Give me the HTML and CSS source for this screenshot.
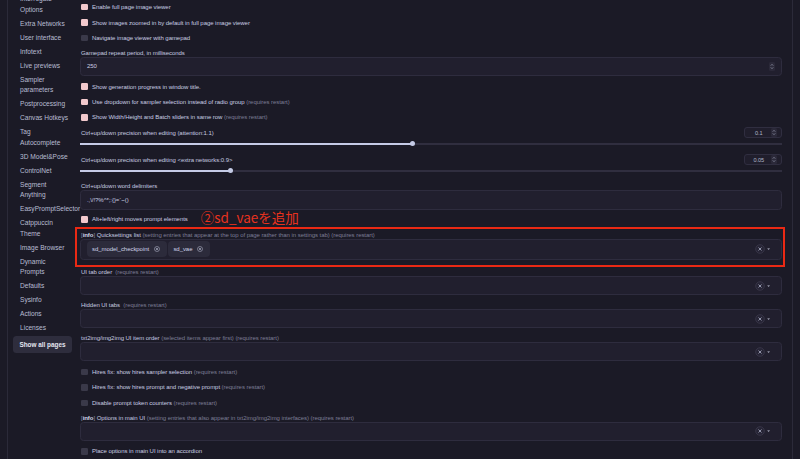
FILE: index.html
```html
<!DOCTYPE html>
<html lang="ja">
<head>
<meta charset="utf-8">
<title>Settings</title>
<link rel="stylesheet" href="styles.css">
</head>
<body>
<div class="page">
  <nav class="sidebar">
    <div class="nav-list">
      <div class="nav-item">Interrogate Options</div>
      <div class="nav-item">Extra Networks</div>
      <div class="nav-item">User interface</div>
      <div class="nav-item">Infotext</div>
      <div class="nav-item">Live previews</div>
      <div class="nav-item">Sampler parameters</div>
      <div class="nav-item">Postprocessing</div>
      <div class="nav-item">Canvas Hotkeys</div>
      <div class="nav-item">Tag Autocomplete</div>
      <div class="nav-item">3D Model&amp;Pose</div>
      <div class="nav-item">ControlNet</div>
      <div class="nav-item">Segment Anything</div>
      <div class="nav-item nowrap">EasyPromptSelector</div>
      <div class="nav-item">Catppuccin Theme</div>
      <div class="nav-item">Image Browser</div>
      <div class="nav-item">Dynamic Prompts</div>
      <div class="nav-item">Defaults</div>
      <div class="nav-item">Sysinfo</div>
      <div class="nav-item">Actions</div>
      <div class="nav-item">Licenses</div>
    </div>
    <button class="show-all">Show all pages</button>
  </nav>

  <main class="settings">
    <div class="check-row"><span class="box on"></span><span>Enable full page image viewer</span></div>
    <div class="check-row"><span class="box on"></span><span>Show images zoomed in by default in full page image viewer</span></div>
    <div class="check-row"><span class="box"></span><span>Navigate image viewer with gamepad</span></div>

    <div class="field">
      <div class="label">Gamepad repeat period, in milliseconds</div>
      <div class="input">
        <span class="value">250</span>
        <svg class="spin" viewBox="0 0 6 9" width="6" height="9"><rect width="6" height="9" rx="1.5" fill="#2b2939"/><path d="M1.8 3.6 L3 2.4 L4.2 3.6 M1.8 5.4 L3 6.6 L4.2 5.4" stroke="#a4a7bd" stroke-width="0.7" fill="none"/></svg>
      </div>
    </div>

    <div class="check-row"><span class="box on"></span><span>Show generation progress in window title.</span></div>
    <div class="check-row"><span class="box on"></span><span>Use dropdown for sampler selection instead of radio group <span class="muted">(requires restart)</span></span></div>
    <div class="check-row"><span class="box on"></span><span>Show Width/Height and Batch sliders in same row <span class="muted">(requires restart)</span></span></div>

    <div class="field slider-field">
      <div class="slider-head">
        <span class="label">Ctrl+up/down precision when editing (attention:1.1)</span>
        <div class="num">
          <span class="num-value">0.1</span>
          <svg class="spin" viewBox="0 0 6 9" width="6" height="9"><rect width="6" height="9" rx="1.5" fill="#2b2939"/><path d="M1.8 3.6 L3 2.4 L4.2 3.6 M1.8 5.4 L3 6.6 L4.2 5.4" stroke="#a4a7bd" stroke-width="0.7" fill="none"/></svg>
        </div>
      </div>
      <div class="slider"><div class="track"><div class="fill" style="width:47.4%"><span class="knob"></span></div></div></div>
    </div>

    <div class="field slider-field">
      <div class="slider-head">
        <span class="label">Ctrl+up/down precision when editing &lt;extra networks:0.9&gt;</span>
        <div class="num">
          <span class="num-value">0.05</span>
          <svg class="spin" viewBox="0 0 6 9" width="6" height="9"><rect width="6" height="9" rx="1.5" fill="#2b2939"/><path d="M1.8 3.6 L3 2.4 L4.2 3.6 M1.8 5.4 L3 6.6 L4.2 5.4" stroke="#a4a7bd" stroke-width="0.7" fill="none"/></svg>
        </div>
      </div>
      <div class="slider"><div class="track"><div class="fill" style="width:21.4%"><span class="knob"></span></div></div></div>
    </div>

    <div class="field text-field">
      <div class="label">Ctrl+up/down word delimiters</div>
      <div class="input textarea"><span class="value">.,\/!?%^*;:{}=`~()</span></div>
    </div>

    <div class="check-row"><span class="box on"></span><span>Alt+left/right moves prompt elements</span><span class="annotation">②sd_vaeを追加</span></div>

    <div class="field annotated">
      <div class="label"><span class="bracket">[</span><b class="info">info</b><span class="bracket">]</span> Quicksettings list <span class="muted">(setting entries that appear at the top of page rather than in settings tab) (requires restart)</span></div>
      <div class="input multi">
        <span class="chip">sd_model_checkpoint<svg class="chip-x" viewBox="0 0 6 6" width="6" height="6"><circle cx="3" cy="3" r="2.5" fill="none" stroke="#a9acc2" stroke-width="0.6"/><path d="M1.9 1.9 L4.1 4.1 M4.1 1.9 L1.9 4.1" stroke="#a9acc2" stroke-width="0.7"/></svg></span>
        <span class="chip">sd_vae<svg class="chip-x" viewBox="0 0 6 6" width="6" height="6"><circle cx="3" cy="3" r="2.5" fill="none" stroke="#a9acc2" stroke-width="0.6"/><path d="M1.9 1.9 L4.1 4.1 M4.1 1.9 L1.9 4.1" stroke="#a9acc2" stroke-width="0.7"/></svg></span>
        <svg class="ms-icons" viewBox="0 0 16 10" width="16" height="10"><circle cx="5" cy="5" r="4.3" fill="#262435" stroke="#3c3a4c" stroke-width="0.8"/><path d="M3.5 3.5 L6.5 6.5 M6.5 3.5 L3.5 6.5" stroke="#9c9fb5" stroke-width="0.9"/><path d="M12.2 4.6 H15 L13.6 5.8 Z" fill="#c6c9dc"/></svg>
      </div>
    </div>

    <div class="field">
      <div class="label">UI tab order &nbsp;<span class="muted">(requires restart)</span></div>
      <div class="input multi">
        <svg class="ms-icons" viewBox="0 0 16 10" width="16" height="10"><circle cx="5" cy="5" r="4.3" fill="#262435" stroke="#3c3a4c" stroke-width="0.8"/><path d="M3.5 3.5 L6.5 6.5 M6.5 3.5 L3.5 6.5" stroke="#9c9fb5" stroke-width="0.9"/><path d="M12.2 4.6 H15 L13.6 5.8 Z" fill="#c6c9dc"/></svg>
      </div>
    </div>

    <div class="field">
      <div class="label">Hidden UI tabs &nbsp;<span class="muted">(requires restart)</span></div>
      <div class="input multi">
        <svg class="ms-icons" viewBox="0 0 16 10" width="16" height="10"><circle cx="5" cy="5" r="4.3" fill="#262435" stroke="#3c3a4c" stroke-width="0.8"/><path d="M3.5 3.5 L6.5 6.5 M6.5 3.5 L3.5 6.5" stroke="#9c9fb5" stroke-width="0.9"/><path d="M12.2 4.6 H15 L13.6 5.8 Z" fill="#c6c9dc"/></svg>
      </div>
    </div>

    <div class="field">
      <div class="label">txt2img/img2img UI item order <span class="muted">(selected items appear first) (requires restart)</span></div>
      <div class="input multi">
        <svg class="ms-icons" viewBox="0 0 16 10" width="16" height="10"><circle cx="5" cy="5" r="4.3" fill="#262435" stroke="#3c3a4c" stroke-width="0.8"/><path d="M3.5 3.5 L6.5 6.5 M6.5 3.5 L3.5 6.5" stroke="#9c9fb5" stroke-width="0.9"/><path d="M12.2 4.6 H15 L13.6 5.8 Z" fill="#c6c9dc"/></svg>
      </div>
    </div>

    <div class="check-row"><span class="box"></span><span>Hires fix: show hires sampler selection <span class="muted">(requires restart)</span></span></div>
    <div class="check-row"><span class="box"></span><span>Hires fix: show hires prompt and negative prompt <span class="muted">(requires restart)</span></span></div>
    <div class="check-row"><span class="box"></span><span>Disable prompt token counters <span class="muted">(requires restart)</span></span></div>

    <div class="field">
      <div class="label"><span class="bracket">[</span><b class="info">info</b><span class="bracket">]</span> Options in main UI <span class="muted">(setting entries that also appear in txt2img/img2img interfaces) (requires restart)</span></div>
      <div class="input multi">
        <svg class="ms-icons" viewBox="0 0 16 10" width="16" height="10"><circle cx="5" cy="5" r="4.3" fill="#262435" stroke="#3c3a4c" stroke-width="0.8"/><path d="M3.5 3.5 L6.5 6.5 M6.5 3.5 L3.5 6.5" stroke="#9c9fb5" stroke-width="0.9"/><path d="M12.2 4.6 H15 L13.6 5.8 Z" fill="#c6c9dc"/></svg>
      </div>
    </div>

    <div class="check-row"><span class="box"></span><span>Place options in main UI into an accordion</span></div>
  </main>
</div>
</body>
</html>
```

FILE: styles.css
```css
* {
  box-sizing: border-box;
  margin: 0;
  padding: 0;
}

html, body {
  background: #1b1a26;
}

body {
  height: 459px;
  overflow: hidden;
  font-family: "Liberation Sans", Arial, sans-serif;
  color: #c7cbe0;
}

.page {
  display: flex;
  height: 459px;
  margin: 0 7px;
  border-left: 1px solid #2b2a39;
  border-right: 1px solid #2b2a39;
}

/* ---------- sidebar ---------- */
.sidebar {
  width: 72px;
  flex: none;
  padding-left: 5px;
}

.nav-list {
  margin-top: -7.3px;
}

.nav-item {
  width: 57px;
  padding: 1.7px 0 1.7px 7px;
  font-size: 6.6px;
  line-height: 10.6px;
  color: #b9bdd3;
}

.nowrap {
  white-space: nowrap;
}

.show-all {
  display: flex;
  align-items: center;
  justify-content: center;
  width: 59px;
  height: 17.5px;
  border: none;
  border-radius: 3.5px;
  background: #2e2d3d;
  color: #e4e6f1;
  font-family: "Liberation Sans", Arial, sans-serif;
  font-size: 6.4px;
  font-weight: bold;
}

/* ---------- main settings ---------- */
.settings {
  width: 702px;
  flex: none;
  display: flex;
  flex-direction: column;
  margin-top: -0.5px;
  font-size: 6px;
  letter-spacing: -0.05px;
}

.check-row {
  display: flex;
  align-items: center;
  gap: 4.5px;
  height: 15.5px;
  padding-left: 1px;
  white-space: nowrap;
  color: #c9cde2;
}

.box {
  flex: none;
  width: 6.5px;
  height: 6.5px;
  border-radius: 1.2px;
  background: #3a3949;
}

.box.on {
  background: #f2c9cd;
}

.muted {
  color: #7c7d95;
}

.field {
  padding: 3px 0;
}

.label {
  height: 8px;
  line-height: 8px;
  padding-left: 1px;
  white-space: nowrap;
}

.bracket {
  color: #8a8ba3;
}

.info {
  font-weight: bold;
  color: #d3d7ea;
}

.input {
  display: flex;
  align-items: center;
  height: 19px;
  padding: 0 6px;
  background: #211f2e;
  border: 1px solid #2e2c3e;
  border-radius: 3.5px;
}

.input .value {
  flex: 1;
  color: #c9cde2;
}

.input .spin {
  flex: none;
}

.textarea {
  height: 20px;
}

.text-field {
  padding-bottom: 1.5px;
}

/* sliders */
.slider-field {
  padding: 2px 0 3px;
}

.slider-head {
  display: flex;
  align-items: center;
  justify-content: space-between;
  height: 11px;
}

.num {
  display: flex;
  align-items: center;
  width: 38px;
  height: 11px;
  padding-right: 4.5px;
  background: #201e2c;
  border: 1px solid #302e40;
  border-radius: 3px;
}

.num-value {
  flex: 1;
  text-align: center;
  font-size: 5.6px;
  color: #b3b6cb;
  padding-left: 2px;
}

.slider {
  display: flex;
  align-items: center;
  height: 11px;
}

.track {
  width: 100%;
  height: 1.8px;
  background: #302e3f;
}

.fill {
  position: relative;
  height: 100%;
  background: #c5cbe6;
}

.knob {
  position: absolute;
  right: -2.7px;
  top: -1.8px;
  width: 5.4px;
  height: 5.4px;
  border-radius: 50%;
  background: #c5cbe6;
}

/* annotation */
.annotation {
  align-self: flex-start;
  margin-left: 8.5px;
  font-family: "Noto Sans CJK JP", "Noto Sans", sans-serif;
  font-size: 13.5px;
  line-height: 10px;
  letter-spacing: 0;
  color: #e8321e;
}

.annotated {
  position: relative;
  padding: 3.5px 0 5px;
}

.annotated::before {
  content: "";
  position: absolute;
  top: 0;
  left: -5px;
  right: -3.4px;
  bottom: -1.5px;
  border: 2.3px solid #ea2914;
}

/* multiselect */
.multi {
  gap: 1.3px;
  padding: 0 10.5px 0 6px;
}

.annotated .multi {
  height: 21.5px;
}

.chip {
  display: flex;
  align-items: center;
  gap: 5px;
  height: 16px;
  padding: 0 7px 0 5px;
  border-radius: 4px;
  background: #2c2b3b;
  color: #d0d4e8;
  white-space: nowrap;
}

.chip-x {
  flex: none;
}

.ms-icons {
  flex: none;
  margin-left: auto;
}
```
